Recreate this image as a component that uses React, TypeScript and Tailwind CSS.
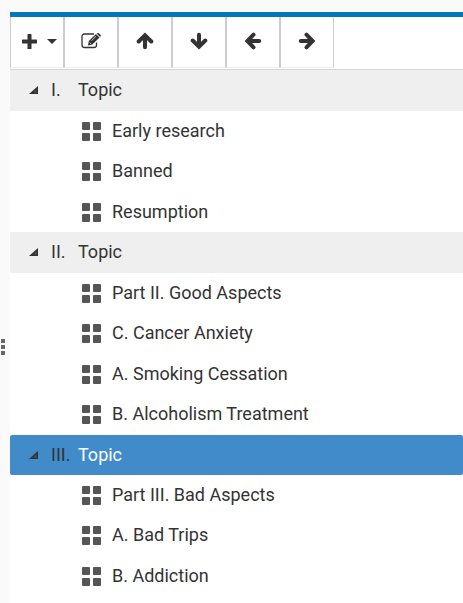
import React, { useState } from 'react';
import clsx from 'clsx';

interface Section {
  numeral: string;
  title: string;
  cards: string[];
}

const sections: Section[] = [
  { numeral: 'I.', title: 'Topic', cards: ['Early research', 'Banned', 'Resumption'] },
  {
    numeral: 'II.',
    title: 'Topic',
    cards: ['Part II. Good Aspects', 'C. Cancer Anxiety', 'A. Smoking Cessation', 'B. Alcoholism Treatment'],
  },
  { numeral: 'III.', title: 'Topic', cards: ['Part III. Bad Aspects', 'A. Bad Trips', 'B. Addiction'] },
];

const PlusIcon = () => (
  <svg width="15" height="15" viewBox="0 0 15 15" fill="currentColor">
    <path d="M5.500.6Q5.500 0 6.100 0h2.800q.6 0 .6.6v4.900h4.900q.6 0 .6.6v2.800q0 .6-.6.6H9.500v4.900q0 .6-.6.6H6.100q-.6 0-.6-.6V9.500H.6Q0 9.500 0 8.900V6.100q0-.6.6-.6h4.900z" />
  </svg>
);

const CaretIcon = () => (
  <svg width="10" height="5" viewBox="0 0 10 5" fill="currentColor">
    <path d="M0 0h10L5 5z" />
  </svg>
);

const EditIcon = () => (
  <svg width="20" height="16" viewBox="0 0 20 16" fill="none">
    <path
      d="M13 1H3.500Q1 1 1 3.500v8.500Q1 14.500 3.500 14.500h9.500q2.500 0 2.500-2.500V9.500"
      stroke="currentColor"
      strokeWidth="1.300"
    />
    <path d="M7 12.500l.8-4.400L15 1l3.500 3.500-7.200 7z" fill="currentColor" />
    <path d="M15.800.5l1-.5q.6-.2 1.100.3l1.700 1.700q.5.500.1 1.100l-.6.800z" fill="currentColor" />
    <path d="M10.300 7.800l4.800-4.600M8.600 9.500l1.500 1.500" stroke="#fff" strokeWidth=".7" />
  </svg>
);

const ArrowIcon = ({ turn = '' }: { turn?: string }) => (
  <svg
    width="18"
    height="18"
    viewBox="0 0 18 18"
    fill="none"
    stroke="currentColor"
    strokeWidth="4"
    strokeLinecap="round"
    className={turn}
  >
    <path d="M9 4v11.200M2.700 9.500L9 3.400l6.300 6.100" strokeLinejoin="miter" />
  </svg>
);

const CardsIcon = () => (
  <svg width="19" height="19" viewBox="0 0 19 19" fill="#555">
    <rect width="8" height="8" rx="1" />
    <rect x="11" width="8" height="8" rx="1" />
    <rect y="11" width="8" height="8" rx="1" />
    <rect x="11" y="11" width="8" height="8" rx="1" />
  </svg>
);

const tools = [
  { label: 'Add', icon: <><PlusIcon /><CaretIcon /></> },
  { label: 'Edit', icon: <EditIcon /> },
  { label: 'Move up', icon: <ArrowIcon /> },
  { label: 'Move down', icon: <ArrowIcon turn="rotate-180" /> },
  { label: 'Move left', icon: <ArrowIcon turn="-rotate-90" /> },
  { label: 'Move right', icon: <ArrowIcon turn="rotate-90" /> },
];

const App: React.FC = () => {
  const [selected, setSelected] = useState(2);

  return (
    <div className="flex min-h-screen bg-[#fafafa] pt-3 font-['Roboto',sans-serif] text-lg text-[#333]">
      <div className="w-2.5 shrink-0 pt-[327px] pl-px">
        <svg width="4" height="16" viewBox="0 0 4 16" fill="#666">
          <rect width="4" height="4" />
          <rect y="6" width="4" height="4" />
          <rect y="12" width="4" height="4" />
        </svg>
      </div>

      <main className="min-w-0 flex-1 border-t-5 border-[#0277bd] bg-white">
        <div className="flex h-[53px] border-b border-[#d6d6d6] pb-px">
          {tools.map((tool) => (
            <button
              key={tool.label}
              type="button"
              aria-label={tool.label}
              className="flex w-[54px] items-center justify-center gap-2.5 border-x border-b border-x-[#ccc] border-b-[#eee] pb-0.5 first:pl-1 hover:bg-gray-100"
            >
              {tool.icon}
            </button>
          ))}
        </div>

        {sections.map((section, index) => (
          <section key={section.numeral}>
            <button
              type="button"
              onClick={() => setSelected(index)}
              className={clsx(
                'flex w-full items-center pl-[19px] text-left',
                index === selected ? 'h-10 rounded-xs bg-[#428bca]' : 'h-[41px] bg-[#efefef] pb-px'
              )}
            >
              <svg width="9" height="8" viewBox="0 0 9 8" className="shrink-0">
                <path d="M9 0v8H0z" fill="#333" />
                <path d="M7.500 3.500v3h-3z" fill="#555" />
              </svg>
              <span className="ml-[13px] w-[27px]">{section.numeral}</span>
              <span className={clsx(index === selected && 'text-white')}>{section.title}</span>
            </button>
            <ul>
              {section.cards.map((card) => (
                <li key={card} className="flex h-10 items-center gap-[11px] pl-[72px] even:h-[41px] even:pb-px">
                  <CardsIcon />
                  <span>{card}</span>
                </li>
              ))}
            </ul>
          </section>
        ))}
      </main>
    </div>
  );
};

export default App;
